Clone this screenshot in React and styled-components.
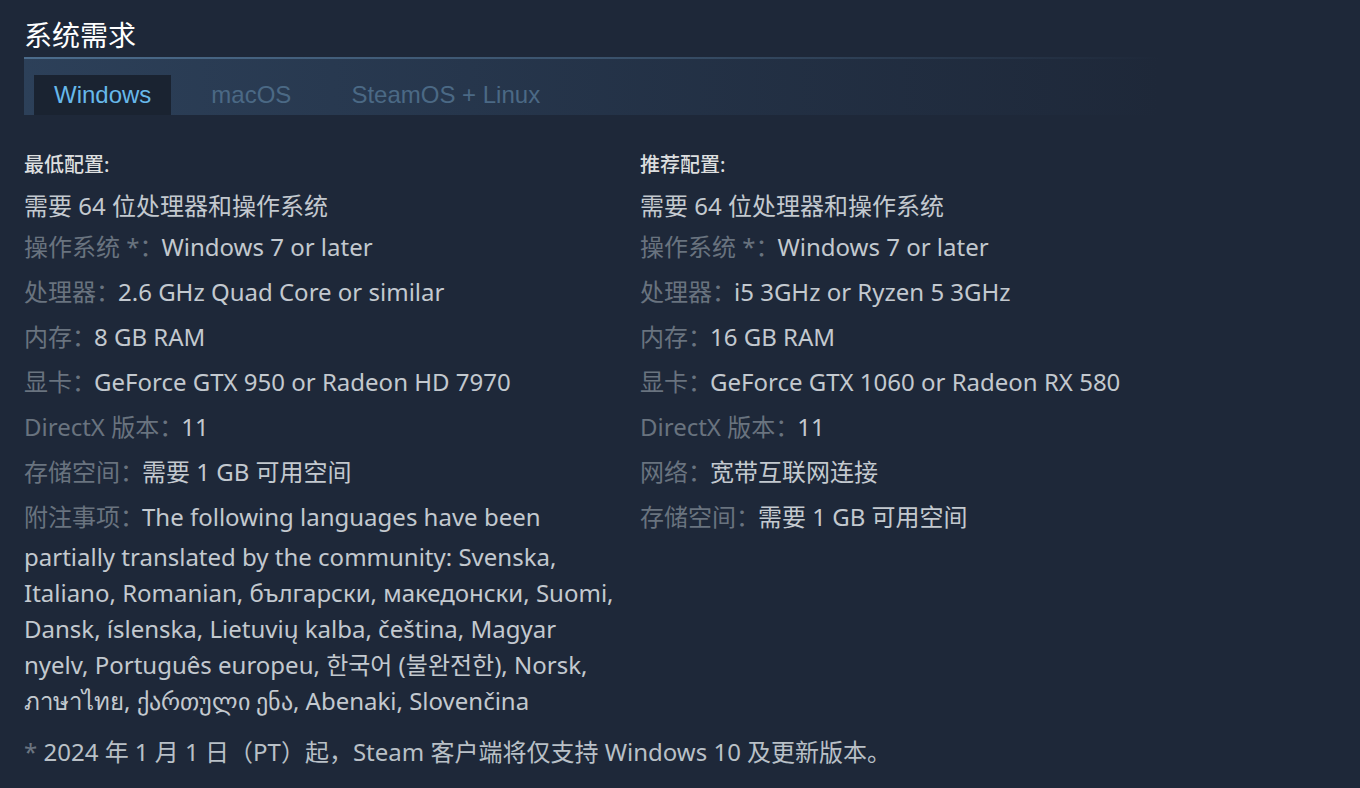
import React from 'react';
import styled, { createGlobalStyle } from 'styled-components';

const GlobalStyle = createGlobalStyle`
  html, body {
    margin: 0;
    background: #1e2839;
  }
  body {
    font-family: "Noto Sans", "Noto Sans CJK SC", sans-serif;
  }
`;

const minimum = [
  ['操作系统 *：', 'Windows 7 or later'],
  ['处理器：', '2.6 GHz Quad Core or similar'],
  ['内存：', '8 GB RAM'],
  ['显卡：', 'GeForce GTX 950 or Radeon HD 7970'],
  ['DirectX 版本：', '11'],
  ['存储空间：', '需要 1 GB 可用空间'],
  [
    '附注事项：',
    'The following languages have been partially translated by the community: Svenska, Italiano, Romanian, български, македонски, Suomi, Dansk, íslenska, Lietuvių kalba, čeština, Magyar nyelv, Português europeu, 한국어 (불완전한), Norsk, ภาษาไทย, ქართული ენა, Abenaki, Slovenčina',
  ],
];

const recommended = [
  ['操作系统 *：', 'Windows 7 or later'],
  ['处理器：', 'i5 3GHz or Ryzen 5 3GHz'],
  ['内存：', '16 GB RAM'],
  ['显卡：', 'GeForce GTX 1060 or Radeon RX 580'],
  ['DirectX 版本：', '11'],
  ['网络：', '宽带互联网连接'],
  ['存储空间：', '需要 1 GB 可用空间'],
];

const tabs = ['Windows', 'macOS', 'SteamOS + Linux'];

const Column = ({ title, items }) => (
  <Col>
    <Heading>{title}</Heading>
    <List>
      <Item>需要 64 位处理器和操作系统</Item>
      {items.map(([label, value]) => (
        <Item key={label}>
          <Label>{label}</Label>
          {value}
        </Item>
      ))}
    </List>
  </Col>
);

const App = () => {
  return (
    <Wrapper>
      <GlobalStyle />
      <Header>
        <Title>系统需求</Title>
        <TabBar>
          {tabs.map((tab, i) => (
            <Tab key={tab} $active={i === 0}>
              {tab}
            </Tab>
          ))}
        </TabBar>
      </Header>
      <Columns>
        <Column title='最低配置:' items={minimum} />
        <Column title='推荐配置:' items={recommended} />
      </Columns>
      <Footnote>
        <Star>*</Star> 2024 年 1 月 1 日（PT）起，Steam 客户端将仅支持 Windows 10 及更新版本。
      </Footnote>
    </Wrapper>
  );
};

const Wrapper = styled.div`
  padding: 18px 24px 0;
  width: 1208px;
`;

const Header = styled.div`
  width: 1136px;
`;

const Title = styled.h2`
  margin: 0;
  font-size: 28px;
  line-height: 34px;
  font-weight: 400;
  color: #ffffff;
  padding-bottom: 5px;
  border-bottom: 2px solid transparent;
  border-image: linear-gradient(to right, #4c6c8c 0%, #3b536d 50%, rgba(59, 83, 109, 0) 100%) 1;
`;

const TabBar = styled.div`
  height: 56px;
  display: flex;
  align-items: flex-end;
  gap: 20px;
  padding-left: 10px;
  background: linear-gradient(to right, rgba(48, 70, 97, 0.8) 0%, rgba(40, 58, 82, 0.55) 55%, rgba(30, 40, 57, 0) 100%);
`;

const Tab = styled.div`
  height: 40px;
  padding: 0 20px;
  display: flex;
  align-items: center;
  font-family: "Liberation Sans", Arial, sans-serif;
  font-size: 24px;
  color: ${(p) => (p.$active ? '#67b8ea' : '#4b6985')};
  background: ${(p) => (p.$active ? '#1a2331' : 'transparent')};
`;

const Columns = styled.div`
  display: grid;
  grid-template-columns: 1fr 1fr;
  gap: 24px;
  margin-top: 36px;
`;

const Col = styled.div`
  min-width: 0;
`;

const Heading = styled.div`
  font-size: 20px;
  line-height: 28px;
  font-weight: 500;
  color: #dcdedf;
`;

const List = styled.ul`
  list-style: none;
  margin: 9px 0 0;
  padding: 0;
`;

const Item = styled.li`
  font-size: 24px;
  line-height: 36px;
  color: #c3c9cf;
`;

const Label = styled.span`
  color: #69737f;
  line-height: 45px;
  margin-right: -2px;
`;

const Footnote = styled.div`
  margin-top: 15px;
  font-size: 24px;
  line-height: 36px;
  color: #b9c0c7;
`;

const Star = styled.span`
  color: #6b7581;
`;

export default App;
